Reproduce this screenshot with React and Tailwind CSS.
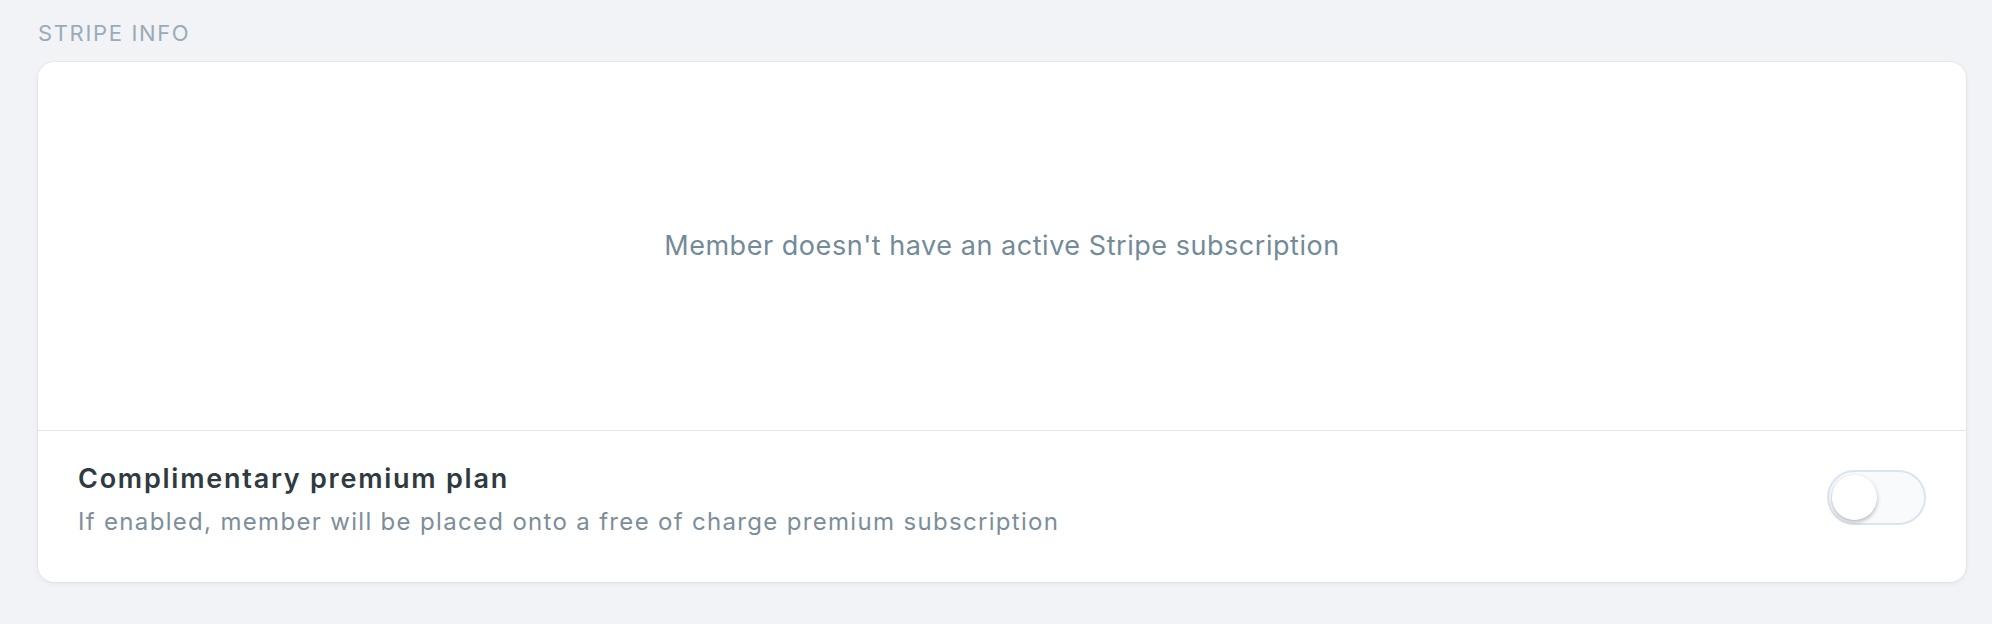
import React from "react";

const Toggle = () => {
  return (
    <div className="w-[99px] h-[55px] mb-[5px] rounded-full border-2 border-[#d9e5ef] bg-[#f8fafc] flex items-center pl-[3px]">
      <div className="w-[45px] h-[45px] rounded-full bg-white shadow-[0_2px_4px_rgba(0,0,0,0.28)]" />
    </div>
  );
};

const App = () => {
  return (
    <div
      className="min-h-screen bg-[#f2f3f7] pl-[38px] pr-[26px] pt-[19px]"
      style={{ fontFamily: "Inter, 'Noto Sans', sans-serif" }}
    >
      {/* Section label */}
      <h4 className="text-[22px] leading-[28px] uppercase tracking-[0.075em] text-[#9aabb6] mb-[15px]">
        Stripe info
      </h4>

      <div className="bg-white rounded-[16px] shadow-[0_0_0_1px_rgba(0,0,0,0.035),0_2px_6px_rgba(0,0,0,0.05)]">
        {/* Empty state */}
        <div className="h-[368px] flex items-center justify-center text-[27px] tracking-[0.02em] text-[#738a98]">
          Member doesn't have an active Stripe subscription
        </div>

        {/* Comp plan */}
        <div className="border-t border-[#e3e8ee] pt-[32px] pb-[45px] pl-[40px] pr-[40px] flex items-center justify-between">
          <div>
            <h3 className="text-[27px] leading-[32px] font-semibold tracking-[0.065em] text-[#2f3a41]">
              Complimentary premium plan
            </h3>
            <p className="mt-[12px] text-[24px] leading-[30px] tracking-[0.055em] text-[#7c8e9a]">
              If enabled, member will be placed onto a free of charge premium subscription
            </p>
          </div>
          <Toggle />
        </div>
      </div>
    </div>
  );
};

export default App;
